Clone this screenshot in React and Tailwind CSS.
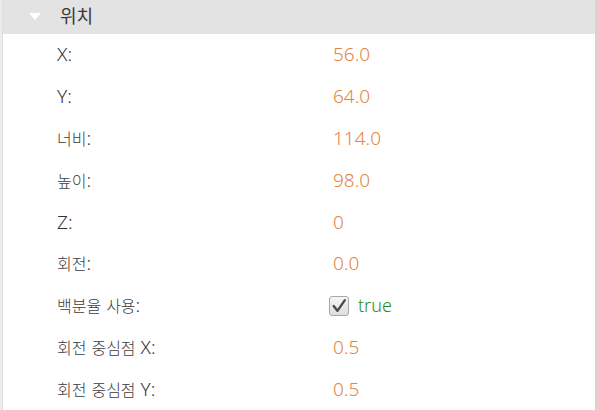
import React from "react";

const rows = [
  { label: "X:", value: "56.0" },
  { label: "Y:", value: "64.0" },
  { label: "너비:", value: "114.0" },
  { label: "높이:", value: "98.0" },
  { label: "Z:", value: "0" },
  { label: "회전:", value: "0.0" },
  { label: "백분율 사용:", value: true },
  { label: "회전 중심점 X:", value: "0.5" },
  { label: "회전 중심점 Y:", value: "0.5" },
];

// Hangul runs are set a bit smaller so they take the width of the narrower Korean UI font
const Label = ({ text, hangul }) =>
  text.split(/([\uAC00-\uD7A3]+)/).map((part, i) =>
    /[\uAC00-\uD7A3]/.test(part) ? (
      <span key={i} className={hangul}>
        {part}
      </span>
    ) : (
      part
    )
  );

const Checkbox = () => (
  <span className="w-[20px] h-[20px] rounded-[3px] border border-[#a8a8a8] bg-gradient-to-b from-[#f6f6f6] to-[#dedede] flex items-center justify-center">
    <svg width="16" height="16" viewBox="0 0 15 15">
      <path d="M2.5 7.5 L6 12 L13 2" fill="none" stroke="#4a4a4a" strokeWidth="2.2" strokeLinecap="round" strokeLinejoin="round" />
    </svg>
  </span>
);

export default function App() {
  return (
    <div
      className="w-[597px] h-[410px] bg-white flex overflow-hidden"
      style={{ fontFamily: '"Noto Sans", "Noto Sans CJK KR", sans-serif' }}
    >
      <div className="w-[3px] bg-[#ececec] border-r border-[#dedede]" />
      <div className="flex-1 flex flex-col">
        <div className="h-[34px] bg-[#e3e3e3] flex items-center">
          <svg width="12" height="8" viewBox="0 0 12 8" className="ml-[26px] mr-[19px]">
            <path d="M0 0 H12 L6 7 Z" fill="#ffffff" />
          </svg>
          <span className="text-[18px] text-[#3a3a3a]">위치</span>
        </div>
        {rows.map((r) => (
          <div key={r.label} className="h-[42px] flex items-center text-[19px]">
            <span className="w-[330px] shrink-0 pl-[54px] text-[#333] font-light">
              <Label text={r.label} hangul="text-[16px] text-[#3c3c3c]" />
            </span>
            {r.value === true ? (
              <span className="flex items-center gap-[9px] -ml-[4px]">
                <Checkbox />
                <span className="text-[#2f8a14] text-[18px] font-light">true</span>
              </span>
            ) : (
              <span className="text-[#e3853f] font-light">{r.value}</span>
            )}
          </div>
        ))}
      </div>
      <div className="w-[2px] bg-[#d4d4d4]" />
    </div>
  );
}
